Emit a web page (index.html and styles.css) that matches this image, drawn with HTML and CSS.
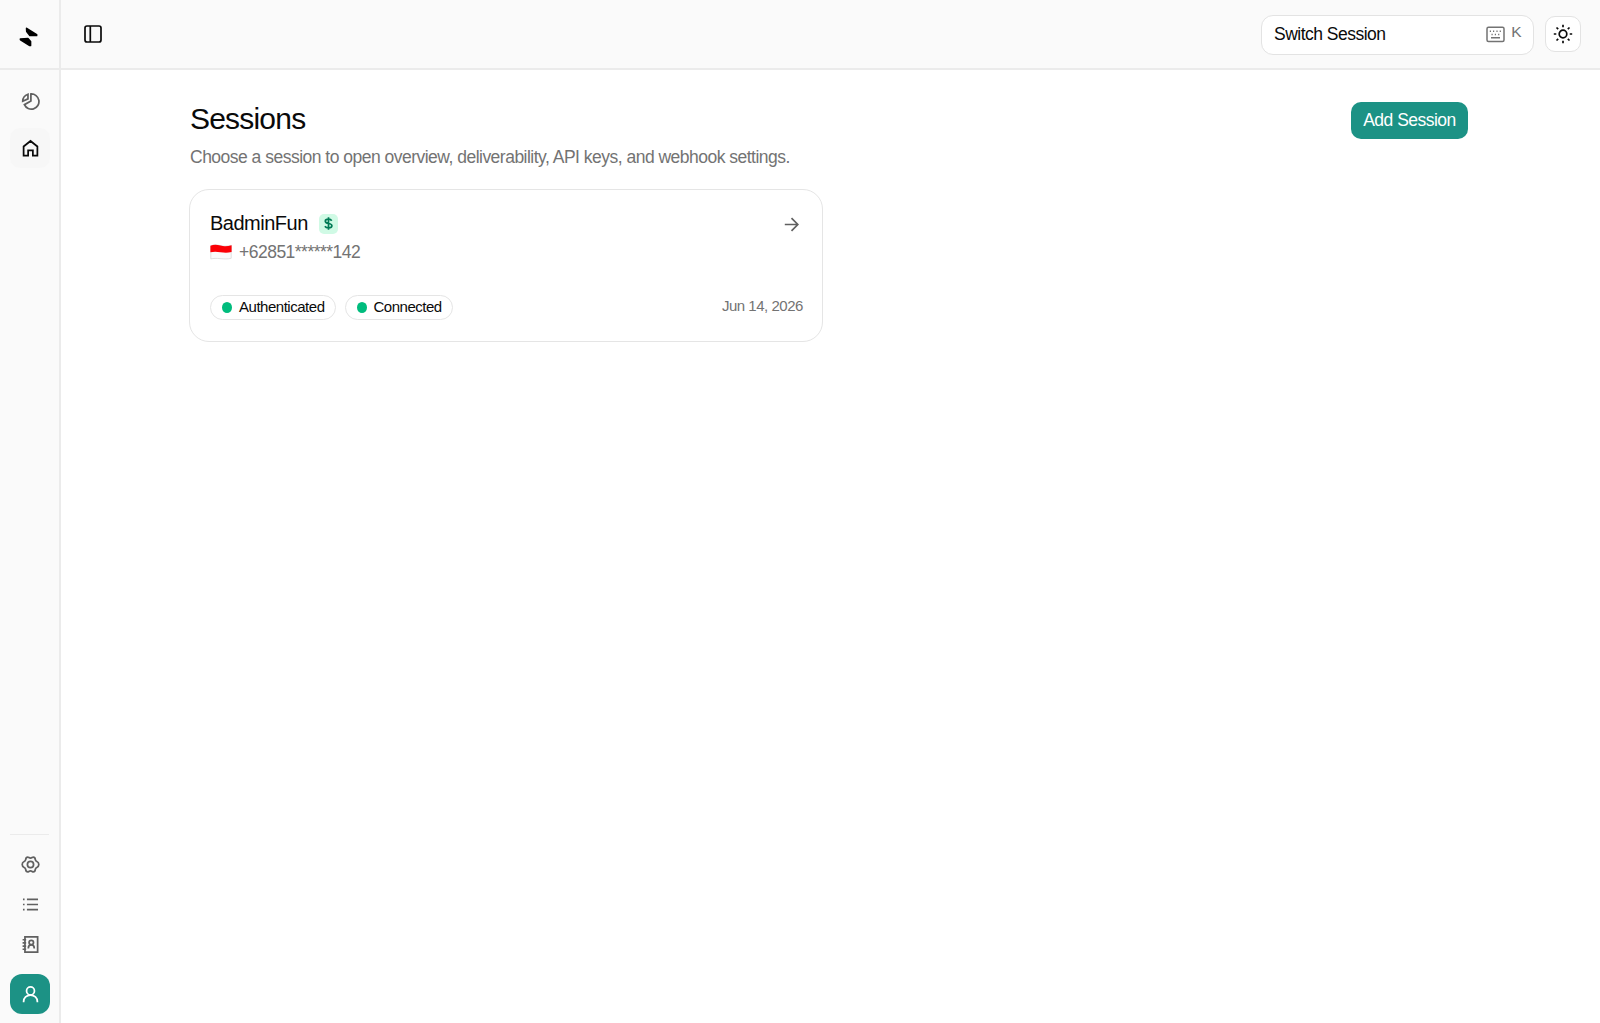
FILE: index.html
```html
<!DOCTYPE html>
<html lang="en">
<head>
<meta charset="utf-8">
<title>Sessions</title>
<link rel="stylesheet" href="styles.css">
</head>
<body>
<div class="app">
  <aside class="sidebar">
    <a class="logo" href="#" aria-label="Home page">
      <svg width="20" height="20" viewBox="0 0 20 20"><path d="M7.600 1.400 17.600 7.600V8.400H10.900L7.800 4.500Z"/><path d="M1.400 12 8.900 11.600 11.500 14.500V18.500L10.400 18.400 1.600 12.700Z"/></svg>
    </a>
    <nav class="nav">
      <a class="nav-item" href="#" aria-label="Statistics">
        <svg class="icon" viewBox="0 0 24 24"><path d="M12.500 2.500v9L4.300 16a9.600 9.600 0 1 0 8.200-13.500Z"/><path d="M8.800 2.800A9.500 9.500 0 0 0 2.200 11.700L8.800 8.700Z"/></svg>
      </a>
      <a class="nav-item active" href="#" aria-label="Sessions">
        <svg class="icon" viewBox="0 0 24 24"><path d="M3.300 21V9.500L12 2.500l8.700 7V21h-5.700v-6.500H9V21Z"/></svg>
      </a>
    </nav>
    <nav class="nav bottom">
      <a class="nav-item" href="#" aria-label="Settings">
        <svg class="icon" viewBox="0 0 24 24"><circle cx="12" cy="12" r="3.900"/><path d="M8.500 2.700c1.200 0 1.800 1.300 3.500 1.300s2.300-1.300 3.500-1.300c1.800 0 2.400 1.300 2.600 3.100.2 1.400.8 2 1.900 2.500 1.600.7 2.500 1.900 2.500 3.700s-.9 3-2.500 3.700c-1.100.5-1.700 1.100-1.900 2.500-.2 1.800-.8 3.100-2.600 3.100-1.200 0-1.800-1.300-3.500-1.300s-2.300 1.300-3.500 1.300c-1.800 0-2.400-1.300-2.600-3.100-.2-1.400-.8-2-1.900-2.500C2.400 15 1.500 13.800 1.500 12s.9-3 2.500-3.700c1.100-.5 1.700-1.100 1.900-2.500.2-1.800.8-3.100 2.600-3.100Z"/></svg>
      </a>
      <a class="nav-item" href="#" aria-label="Logs">
        <svg class="icon" viewBox="0 0 24 24"><path d="M7.500 5.500h14M7.500 12h14M7.500 18.500h14M2.500 5.500h2M2.500 12h2M2.500 18.500h2"/></svg>
      </a>
      <a class="nav-item" href="#" aria-label="Contacts">
        <svg class="icon" viewBox="0 0 24 24"><path d="M5 2.500h16v19H5ZM2 6h4.500M2 10h4.500M2 14h4.500M2 18h4.500"/><circle cx="13" cy="9.500" r="2.800"/><path d="M9.300 17v-.6c0-2.500 1.400-4 3.700-4s3.700 1.500 3.700 4v.6"/></svg>
      </a>
    </nav>
    <button class="avatar" aria-label="Account">
      <svg class="icon" viewBox="0 0 24 24"><circle cx="12" cy="7.500" r="5"/><path d="M3.300 21.800v-.8c0-4.700 3.700-8.300 8.700-8.300s8.700 3.600 8.700 8.300v.8"/></svg>
    </button>
  </aside>
  <div class="page">
    <header class="topbar">
      <button class="toggle" aria-label="Toggle sidebar">
        <svg width="18" height="18" viewBox="0 0 18 18"><rect x="1" y="1" width="16" height="16" rx="2"/><path d="M6.300 1v16"/></svg>
      </button>
      <div class="tools">
        <button class="switcher"><span>Switch Session</span>
          <span class="shortcut"><svg width="19" height="17" viewBox="0 0 19 17"><rect x="1" y="1.200" width="17" height="14.300" rx="1.500"/><path d="M3.800 5.200h1.200M7 5.200h1.200M10.400 5.200h1.200M13.700 5.200h1.200M5.500 8.500h1.200M8.800 8.500h1.200M12.100 8.500h1.200M5 11.800h9"/></svg><span class="key">K</span></span>
        </button>
        <button class="theme" aria-label="Theme">
          <svg width="20" height="20" viewBox="0 0 20 20"><circle cx="10" cy="10" r="3.800"/><path d="M10 .8v2.500M10 16.700v2.500M.8 10h2.500M16.700 10h2.500M3.500 3.500l1.700 1.700M14.800 14.800l1.700 1.700M3.500 16.500l1.700-1.700M14.800 5.200l1.700-1.700"/></svg>
        </button>
      </div>
    </header>
    <main class="content">
      <div class="heading">
        <div class="intro">
          <h1 class="title">Sessions</h1>
          <p class="subtitle">Choose a session to open overview, deliverability, API keys, and webhook settings.</p>
        </div>
        <button class="add">Add Session</button>
      </div>
      <article class="card">
        <div class="card-head">
          <div>
            <div class="name-row"><span class="name">BadminFun</span>
              <span class="plan"><svg width="11" height="15" viewBox="0 0 11 15"><path d="M8.700 4.700C8.100 3.700 7.100 3.200 5.500 3.200 3.700 3.200 2.300 3.900 2.300 5.200c0 3.100 6.600 1.600 6.600 4.500 0 1.400-1.300 2.200-3.400 2.200-1.700 0-2.900-.5-3.600-1.600M5.500 1.200v12.600"/></svg></span>
            </div>
            <div class="phone-row">
              <svg class="flag" width="22" height="16" viewBox="0 0 22 16"><path d="M.8 1.700C4 .6 7 .8 10.500 1.600S18 2.200 21.200 1.300v13c-3.500.9-7 .7-11 .3s-6.400-.2-9.400.3Z" fill="#fafafa" stroke="#ccc" stroke-width=".6"/><path d="M.4 1.700C4 .4 7 .7 10.500 1.600S18 2.200 21.600 1.200v6.800c-4 1-7.500.8-11.100.2S4 7.300.4 8.300Z" fill="#fb0006" stroke="none"/></svg>
              <span>+62851******142</span>
            </div>
          </div>
          <svg class="arrow" width="15" height="15" viewBox="0 0 15 15"><path d="M.8 7.500h13M7.500 1.200l6.300 6.300-6.300 6.300"/></svg>
        </div>
        <div class="card-foot">
          <div class="badges">
            <span class="badge"><i class="dot"></i><span class="label">Authenticated</span></span>
            <span class="badge"><i class="dot"></i><span class="label">Connected</span></span>
          </div>
          <time class="date">Jun 14, 2026</time>
        </div>
      </article>
    </main>
  </div>
</div>
</body>
</html>
```
FILE: styles.css
```css
* { box-sizing: border-box; }
body { margin: 0; font-family: "Liberation Sans", Arial, sans-serif; font-size: 17.5px; letter-spacing: -0.51px; color: #0a0a0a; background: #fff; }
button { font: inherit; letter-spacing: inherit; color: inherit; border: 0; background: none; padding: 0; }
h1, p { margin: 0; font-weight: 400; }
svg { display: block; fill: none; stroke: currentColor; stroke-width: 1.7; flex: none; }

.app { display: flex; height: 1023px; overflow: hidden; }

.sidebar { width: 61px; flex: none; display: flex; flex-direction: column; background: #fafafa; border-right: 2px solid #ebebeb; }
.logo { height: 70px; flex: none; padding: 27px 0 0 19px; border-bottom: 2px solid #ebebeb; color: #000; }
.logo svg { fill: currentColor; stroke-width: 1.7; stroke-linejoin: round; }
.nav { display: flex; flex-direction: column; gap: 7px; padding: 11px 0 0 10px; }
.nav-item { width: 40px; height: 40px; border-radius: 10px; display: flex; align-items: center; justify-content: center; color: #606060; }
.active { color: #0a0a0a; background: #f7f7f7; }
.icon { width: 19px; height: 19px; stroke-width: 2.2; }
.bottom { margin: auto 10px 0; padding: 9px 0 0; gap: 0; border-top: 1px solid #ebebeb; }
.avatar { width: 40px; height: 40px; margin: 10px 0 9px 10px; flex: none; border-radius: 12px; background: #1c9285; color: #fff; display: flex; align-items: center; justify-content: center; }

.page { flex: 1; min-width: 0; }
.topbar { height: 70px; display: flex; justify-content: space-between; padding: 15px 19px 0 23px; background: #fafafa; border-bottom: 2px solid #ebebeb; }
.toggle { height: 37px; }
.tools { display: flex; gap: 11px; }
.switcher { width: 273px; height: 40px; border: 1px solid #e3e3e3; border-radius: 12px; background: #fff; display: flex; justify-content: space-between; align-items: center; padding: 0 12px 2px; }
.shortcut { display: flex; align-items: center; gap: 6px; color: #737373; }
.shortcut svg { stroke-width: 1.5; }
.key { font-size: 15.500px; line-height: 17px; padding-bottom: 5px; }
.theme { width: 36px; height: 36px; margin-top: 1px; border: 1px solid #e3e3e3; border-radius: 10px; background: #fff; display: flex; align-items: center; justify-content: center; }

.content { width: 1279px; margin-left: 128px; padding-top: 32px; }
.heading { display: flex; justify-content: space-between; align-items: flex-start; }
.intro { padding-left: 1px; }
.title { font-size: 30px; line-height: 34px; letter-spacing: -0.8px; }
.subtitle { line-height: 25px; margin-top: 9px; color: #737373; }
.add { width: 117px; height: 37px; border-radius: 10px; background: #1c9285; color: #fff; line-height: 36px; padding-bottom: 1px; }

.card { width: 634px; height: 153px; margin-top: 19px; border: 1px solid #e5e5e5; border-radius: 20px; padding: 19px 19px 21px 20px; display: flex; flex-direction: column; justify-content: space-between; }
.card-head, .card-foot { display: flex; justify-content: space-between; }
.name-row { display: flex; gap: 11px; align-items: center; height: 29px; }
.name { font-size: 20px; letter-spacing: -0.5px; line-height: 26px; padding-bottom: 2px; }
.plan { width: 19px; height: 20px; border-radius: 5px; background: #d0fae5; color: #007a55; display: flex; align-items: center; justify-content: center; }
.phone-row { display: flex; gap: 7px; align-items: center; height: 28px; color: #737373; }
.arrow { margin: 8px 4px 0 0; color: #606060; }
.badges { display: flex; gap: 9px; }
.badge { display: flex; align-items: center; gap: 7px; height: 25px; border: 1px solid #e5e5e5; border-radius: 13px; padding: 0 10px 0 11px; font-size: 15px; letter-spacing: -0.48px; }
.label { line-height: 19px; padding-bottom: 2px; }
.dot { width: 10px; height: 11px; border-radius: 50%; background: #00bc7d; }
.date { font-size: 15px; letter-spacing: -0.47px; line-height: 22px; color: #737373; }
```
